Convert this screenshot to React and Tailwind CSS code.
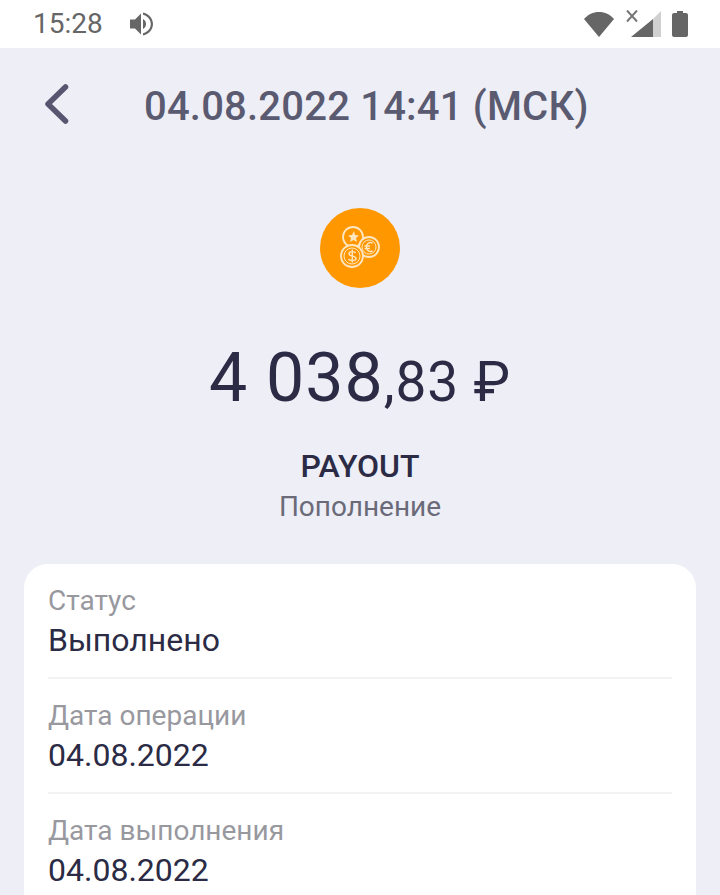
const rows = [
  { label: 'Статус', value: 'Выполнено' },
  { label: 'Дата операции', value: '04.08.2022' },
  { label: 'Дата выполнения', value: '04.08.2022' },
]

function StatusBar() {
  return (
    <div className="h-12 bg-white flex items-center justify-between pl-[33px] pr-8 shrink-0">
      <div className="flex items-center gap-[27px]">
        <span className="text-[28px] leading-none text-[#666666]">15:28</span>
        <svg width="24" height="26" viewBox="0 0 24 26" fill="#666666">
          <path d="M0 8.500h5l6-6v21l-6-6H0z" />
          <path d="M13 8c2 1 3 2.800 3 5s-1 4-3 5z" />
          <path d="M13 1.500c5.500 1 10 5.800 10 11.500s-4.500 10.500-10 11.500v-2.200c4.300-1 7.800-4.800 7.800-9.300S17.300 4.700 13 3.700z" />
        </svg>
      </div>
      <div className="flex items-center">
        <svg width="30" height="26" viewBox="0 0 30 26" fill="#666666">
          <path d="M0 8C4 3.500 9 1 15 1s11 2.500 15 7L15 26z" />
        </svg>
        <svg className="ml-[12px]" width="35" height="28" viewBox="0 0 35 28">
          <path d="M1 0.500l10 11M11 0.500L1 11.500" stroke="#777777" strokeWidth="2" fill="none" />
          <path d="M5 27L27 9v18z" fill="#666666" />
          <path d="M27 9L35 1v26h-8z" fill="#d0d0d0" />
        </svg>
        <svg className="ml-[11px]" width="16" height="26" viewBox="0 0 16 26" fill="#666666">
          <path d="M5 0h6v2h3a2 2 0 0 1 2 2v20a2 2 0 0 1-2 2H2a2 2 0 0 1-2-2V4a2 2 0 0 1 2-2h3z" />
        </svg>
      </div>
    </div>
  )
}

function CoinsIcon() {
  return (
    <svg width="44" height="44" viewBox="0 0 44 44" fill="none" stroke="#ffe6c0" strokeWidth="1.800">
      <circle cx="15" cy="11" r="10" />
      <path d="M16 5l1 4 4 .5-3 2.500 1 4-3.500-2-3.500 2 1-4-3-2.500 4-.5z" fill="#ffe6c0" stroke="none" />
      <circle cx="31" cy="21" r="10" fill="#ff9800" />
      <circle cx="31" cy="21" r="7" strokeWidth="1" />
      <path d="M34.500 17c-3.500-1.500-6 .8-6 4s2.500 5.500 6 4M26.500 20h5.500M26.500 22.500h5.500" strokeWidth="1.400" />
      <circle cx="14" cy="30" r="11" fill="#ff9800" />
      <circle cx="14" cy="30" r="8" strokeWidth="1" />
      <path d="M17.500 27c-.5-1.800-6.500-2.200-6.500.7 0 3.200 7 1.700 7 4.800 0 2.800-6.500 2.500-7.500.7M14.300 23.500v13" strokeWidth="1.400" />
    </svg>
  )
}

export default function App() {
  return (
    <div className="w-[720px] h-[895px] overflow-hidden bg-[#edeef6] flex flex-col font-['Roboto',sans-serif]">
      <StatusBar />

      {/* Header */}
      <div className="h-[116px] shrink-0 flex items-center pl-[44px]">
        <svg className="mb-1" width="25" height="42" viewBox="0 0 25 42" fill="none" stroke="#565670" strokeWidth="5.500" strokeLinecap="round" strokeLinejoin="round">
          <path d="M21.500 4L4 21l17.500 17" />
        </svg>
        <h1 className="ml-[75px] mt-[2px] text-[40px] leading-none font-medium tracking-[0.2px] text-[#5a5a70]">04.08.2022 14:41 (МСК)</h1>
      </div>

      {/* Amount */}
      <div className="flex flex-col items-center">
        <div className="mt-[44px] w-20 h-20 rounded-full bg-[#ff9800] flex items-center justify-center">
          <CoinsIcon />
        </div>
        <div className="mt-[52px] h-[76px] flex items-baseline text-[#2b2b45]">
          <span className="text-[68px] leading-[76px] tracking-[1px]">4 038</span>
          <span className="text-[55px] tracking-[0.9px]">,83 ₽</span>
        </div>
        <div className="mt-[30px] text-[32px] leading-10 font-medium text-[#2b2b45]">PAYOUT</div>
        <div className="mt-[5px] text-[28px] leading-8 text-[#6a6a78]">Пополнение</div>
      </div>

      {/* Details */}
      <div className="mt-[41px] mx-6 bg-white rounded-t-3xl px-6 pt-[21px] flex-1">
        {rows.map((row, i) => (
          <div key={row.label} className={i < rows.length - 1 ? 'border-b-2 border-[#f2f2f5] h-[94px] mb-[21px]' : ''}>
            <div className="text-[28px] leading-8 text-[#98989f]">{row.label}</div>
            <div className="mt-[5px] text-[32px] leading-9 text-[#2b2b45]">{row.value}</div>
          </div>
        ))}
      </div>
    </div>
  )
}
